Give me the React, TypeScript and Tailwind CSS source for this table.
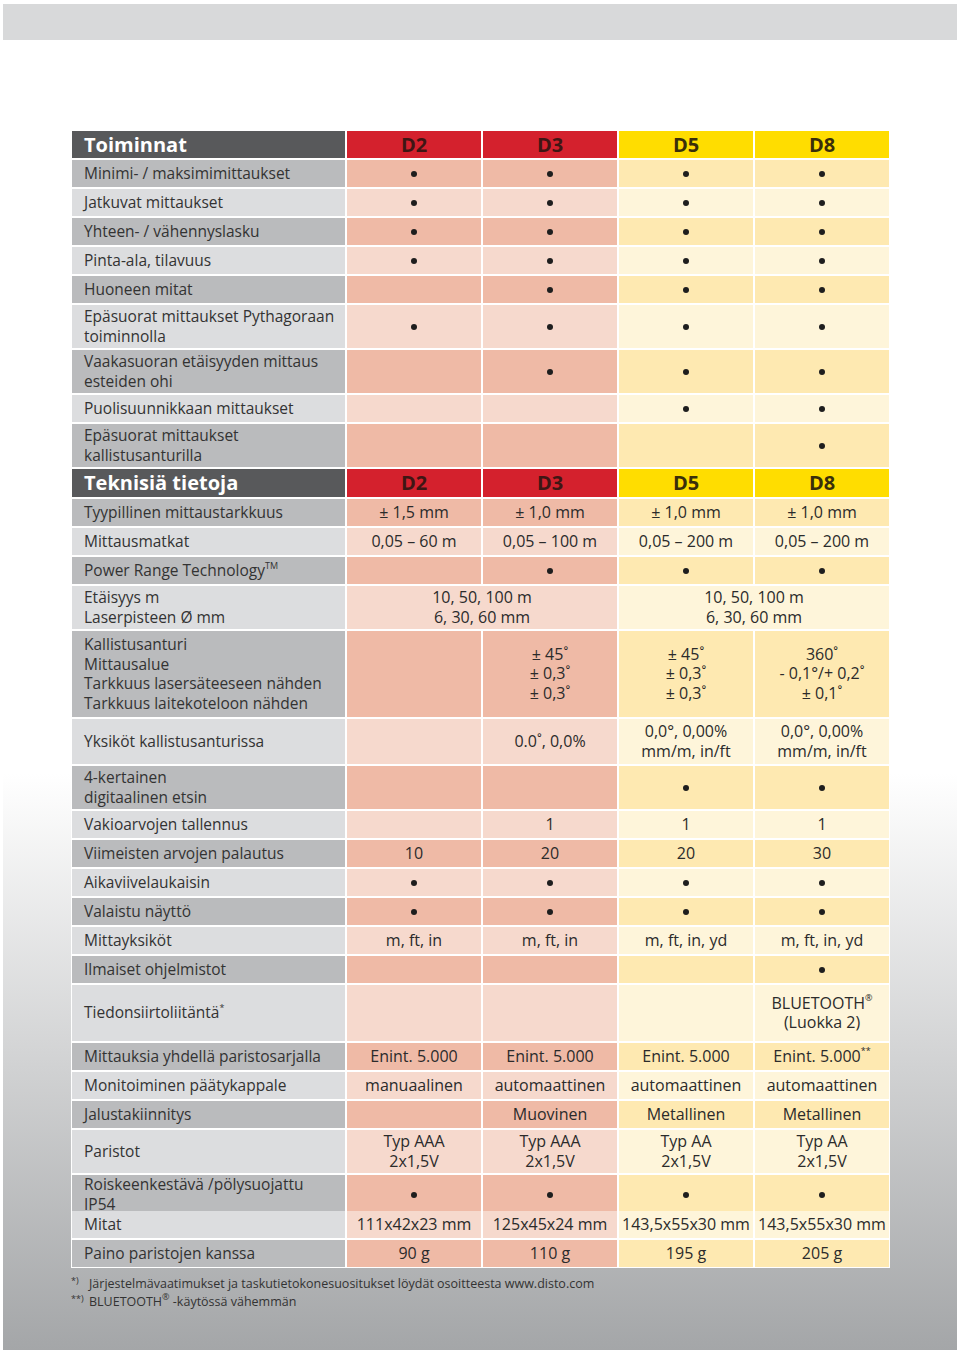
import React from "react";

type Shade = "d" | "l";
type Row = {
  label: React.ReactNode;
  h: string;
  s: Shade;
  cells?: React.ReactNode[];
  merged?: [React.ReactNode, React.ReactNode];
};

const B = <span className="inline-block w-[6px] h-[6px] rounded-full bg-[#1e1e1e] align-middle" />;
const Sup = ({ children }: { children: React.ReactNode }) => (
  <sup className="text-[9px] relative top-[-1px] align-super leading-none">{children}</sup>
);

const L = ({ a, b }: { a: React.ReactNode; b: React.ReactNode }) => (
  <>
    <div>{a}</div>
    <div>{b}</div>
  </>
);

const rows1: Row[] = [
  { label: "Minimi- / maksimimittaukset", h: "h-[27px]", s: "d", cells: [B, B, B, B] },
  { label: "Jatkuvat mittaukset", h: "h-[27px]", s: "l", cells: [B, B, B, B] },
  { label: "Yhteen- / vähennyslasku", h: "h-[27px]", s: "d", cells: [B, B, B, B] },
  { label: "Pinta-ala, tilavuus", h: "h-[27px]", s: "l", cells: [B, B, B, B] },
  { label: "Huoneen mitat", h: "h-[27px]", s: "d", cells: ["", B, B, B] },
  { label: <L a="Epäsuorat mittaukset Pythagoraan" b="toiminnolla" />, h: "h-[43px]", s: "l", cells: [B, B, B, B] },
  { label: <L a="Vaakasuoran etäisyyden mittaus" b="esteiden ohi" />, h: "h-[43px]", s: "d", cells: ["", B, B, B] },
  { label: "Puolisuunnikkaan mittaukset", h: "h-[27px]", s: "l", cells: ["", "", B, B] },
  { label: <L a="Epäsuorat mittaukset" b="kallistusanturilla" />, h: "h-[43px]", s: "d", cells: ["", "", "", B] },
];

const rows2: Row[] = [
  { label: "Tyypillinen mittaustarkkuus", h: "h-[27px]", s: "d", cells: ["± 1,5 mm", "± 1,0 mm", "± 1,0 mm", "± 1,0 mm"] },
  { label: "Mittausmatkat", h: "h-[27px]", s: "l", cells: ["0,05 – 60 m", "0,05 – 100 m", "0,05 – 200 m", "0,05 – 200 m"] },
  {
    label: (
      <span>
        Power Range Technology<Sup>TM</Sup>
      </span>
    ),
    h: "h-[27px]",
    s: "d",
    cells: ["", B, B, B],
  },
  {
    label: <L a="Etäisyys m" b="Laserpisteen Ø mm" />,
    h: "h-[43px]",
    s: "l",
    merged: [<L a="10, 50, 100 m" b="6, 30, 60 mm" />, <L a="10, 50, 100 m" b="6, 30, 60 mm" />],
  },
  {
    label: (
      <>
        <div>Kallistusanturi</div>
        <div>Mittausalue</div>
        <div>Tarkkuus lasersäteeseen nähden</div>
        <div>Tarkkuus laitekoteloon nähden</div>
      </>
    ),
    h: "h-[86px]",
    s: "d",
    cells: [
      "",
      <>
        <div>± 45˚</div>
        <div>± 0,3˚</div>
        <div>± 0,3˚</div>
      </>,
      <>
        <div>± 45˚</div>
        <div>± 0,3˚</div>
        <div>± 0,3˚</div>
      </>,
      <>
        <div>360˚</div>
        <div>- 0,1°/+ 0,2˚</div>
        <div>± 0,1˚</div>
      </>,
    ],
  },
  {
    label: "Yksiköt kallistusanturissa",
    h: "h-[45px]",
    s: "l",
    cells: ["", "0.0˚, 0,0%", <L a="0,0°, 0,00%" b="mm/m, in/ft" />, <L a="0,0°, 0,00%" b="mm/m, in/ft" />],
  },
  { label: <L a="4-kertainen" b="digitaalinen etsin" />, h: "h-[43px]", s: "d", cells: ["", "", B, B] },
  { label: "Vakioarvojen tallennus", h: "h-[27px]", s: "l", cells: ["", "1", "1", "1"] },
  { label: "Viimeisten arvojen palautus", h: "h-[27px]", s: "d", cells: ["10", "20", "20", "30"] },
  { label: "Aikaviivelaukaisin", h: "h-[27px]", s: "l", cells: [B, B, B, B] },
  { label: "Valaistu näyttö", h: "h-[27px]", s: "d", cells: [B, B, B, B] },
  { label: "Mittayksiköt", h: "h-[27px]", s: "l", cells: ["m, ft, in", "m, ft, in", "m, ft, in, yd", "m, ft, in, yd"] },
  { label: "Ilmaiset ohjelmistot", h: "h-[27px]", s: "d", cells: ["", "", "", B] },
  {
    label: (
      <span>
        Tiedonsiirtoliitäntä<Sup>*</Sup>
      </span>
    ),
    h: "h-[56px]",
    s: "l",
    cells: [
      "",
      "",
      "",
      <>
        <div>
          BLUETOOTH<Sup>®</Sup>
        </div>
        <div>(Luokka 2)</div>
      </>,
    ],
  },
  {
    label: "Mittauksia yhdellä paristosarjalla",
    h: "h-[27px]",
    s: "d",
    cells: [
      "Enint. 5.000",
      "Enint. 5.000",
      "Enint. 5.000",
      <span>
        Enint. 5.000<Sup>**</Sup>
      </span>,
    ],
  },
  { label: "Monitoiminen päätykappale", h: "h-[27px]", s: "l", cells: ["manuaalinen", "automaattinen", "automaattinen", "automaattinen"] },
  { label: "Jalustakiinnitys", h: "h-[27px]", s: "d", cells: ["", "Muovinen", "Metallinen", "Metallinen"] },
  {
    label: "Paristot",
    h: "h-[43px]",
    s: "l",
    cells: [
      <L a="Typ AAA" b="2x1,5V" />,
      <L a="Typ AAA" b="2x1,5V" />,
      <L a="Typ AA" b="2x1,5V" />,
      <L a="Typ AA" b="2x1,5V" />,
    ],
  },
  { label: <L a="Roiskeenkestävä /pölysuojattu" b="IP54" />, h: "h-[34px]", s: "d", cells: [B, B, B, B] },
  { label: "Mitat", h: "h-[27px]", s: "l", cells: ["111x42x23 mm", "125x45x24 mm", "143,5x55x30 mm", "143,5x55x30 mm"] },
  { label: "Paino paristojen kanssa", h: "h-[27px]", s: "d", cells: ["90 g", "110 g", "195 g", "205 g"] },
];

const labelBg = { d: "bg-[#babbbd]", l: "bg-[#dcdddf]" };
const redBg = { d: "bg-[#efbaa6]", l: "bg-[#f6d9cd]" };
const yelBg = { d: "bg-[#fee9b1]", l: "bg-[#fef5da]" };

function Cell({ bg, children, span }: { bg: string; children?: React.ReactNode; span?: boolean }) {
  return (
    <div
      className={`${bg} ${span ? "col-span-2" : ""} flex flex-col items-center justify-center text-center text-[16px] leading-[19.5px] text-[#2b2b2b] whitespace-nowrap`}
    >
      {children}
    </div>
  );
}

function DataRow({ r }: { r: Row }) {
  return (
    <div className={`grid grid-cols-[273px_134px_134px_134px_134px] gap-x-[2px] ${r.h}`}>
      <div
        className={`${labelBg[r.s]} flex flex-col justify-center pl-[12px] text-[15.5px] leading-[19.5px] text-[#333333] whitespace-nowrap`}
      >
        {r.label}
      </div>
      {r.merged ? (
        <>
          <Cell bg={redBg[r.s]} span>
            {r.merged[0]}
          </Cell>
          <Cell bg={yelBg[r.s]} span>
            {r.merged[1]}
          </Cell>
        </>
      ) : (
        r.cells!.map((c, i) => (
          <Cell key={i} bg={i < 2 ? redBg[r.s] : yelBg[r.s]}>
            {c}
          </Cell>
        ))
      )}
    </div>
  );
}

function Header({ title, h }: { title: string; h: string }) {
  return (
    <div className={`grid grid-cols-[273px_134px_134px_134px_134px] gap-x-[2px] ${h}`}>
      <div className="bg-[#58595b] flex items-center pl-[12px] text-[20px] font-bold text-white leading-none">
        {title}
      </div>
      <div className="bg-[#d4212d] flex items-center justify-center text-[20px] font-bold text-[#3f1614] leading-none">D2</div>
      <div className="bg-[#d4212d] flex items-center justify-center text-[20px] font-bold text-[#3f1614] leading-none">D3</div>
      <div className="bg-[#ffdd00] flex items-center justify-center text-[20px] font-bold text-[#3a2f0a] leading-none">D5</div>
      <div className="bg-[#ffdd00] flex items-center justify-center text-[20px] font-bold text-[#3a2f0a] leading-none">D8</div>
    </div>
  );
}

export default function App() {
  return (
    <div className="w-[960px] h-[1353px] bg-white pt-[4px] px-[3px] pb-[3px]" style={{ fontFamily: '"Open Sans", "Noto Sans", sans-serif' }}>
      <div className="h-[36px] bg-[#d8d9da]" />
      <div className="h-[1310px] bg-[linear-gradient(to_bottom,#ffffff_0%,#ffffff_56%,#a4a6a8_100%)] pt-[90px] pl-[68px]">
        <div className="w-[819px] bg-white p-[1px] flex flex-col gap-y-[2px]">
          <Header title="Toiminnat" h="h-[27px]" />
          {rows1.map((r, i) => (
            <DataRow key={"a" + i} r={r} />
          ))}
          <Header title="Teknisiä tietoja" h="h-[28px]" />
          {rows2.map((r, i) => (
            <DataRow key={"b" + i} r={r} />
          ))}
        </div>
        <div className="mt-[7px] text-[12.5px] leading-[18px] text-[#333333]">
          <div className="flex">
            <span className="w-[18px] text-[9px] leading-[12px]">*)</span>
            <span>Järjestelmävaatimukset ja taskutietokonesuositukset löydät osoitteesta www.disto.com</span>
          </div>
          <div className="flex">
            <span className="w-[18px] text-[9px] leading-[12px]">**)</span>
            <span>
              BLUETOOTH<Sup>®</Sup> -käytössä vähemmän
            </span>
          </div>
        </div>
      </div>
    </div>
  );
}
